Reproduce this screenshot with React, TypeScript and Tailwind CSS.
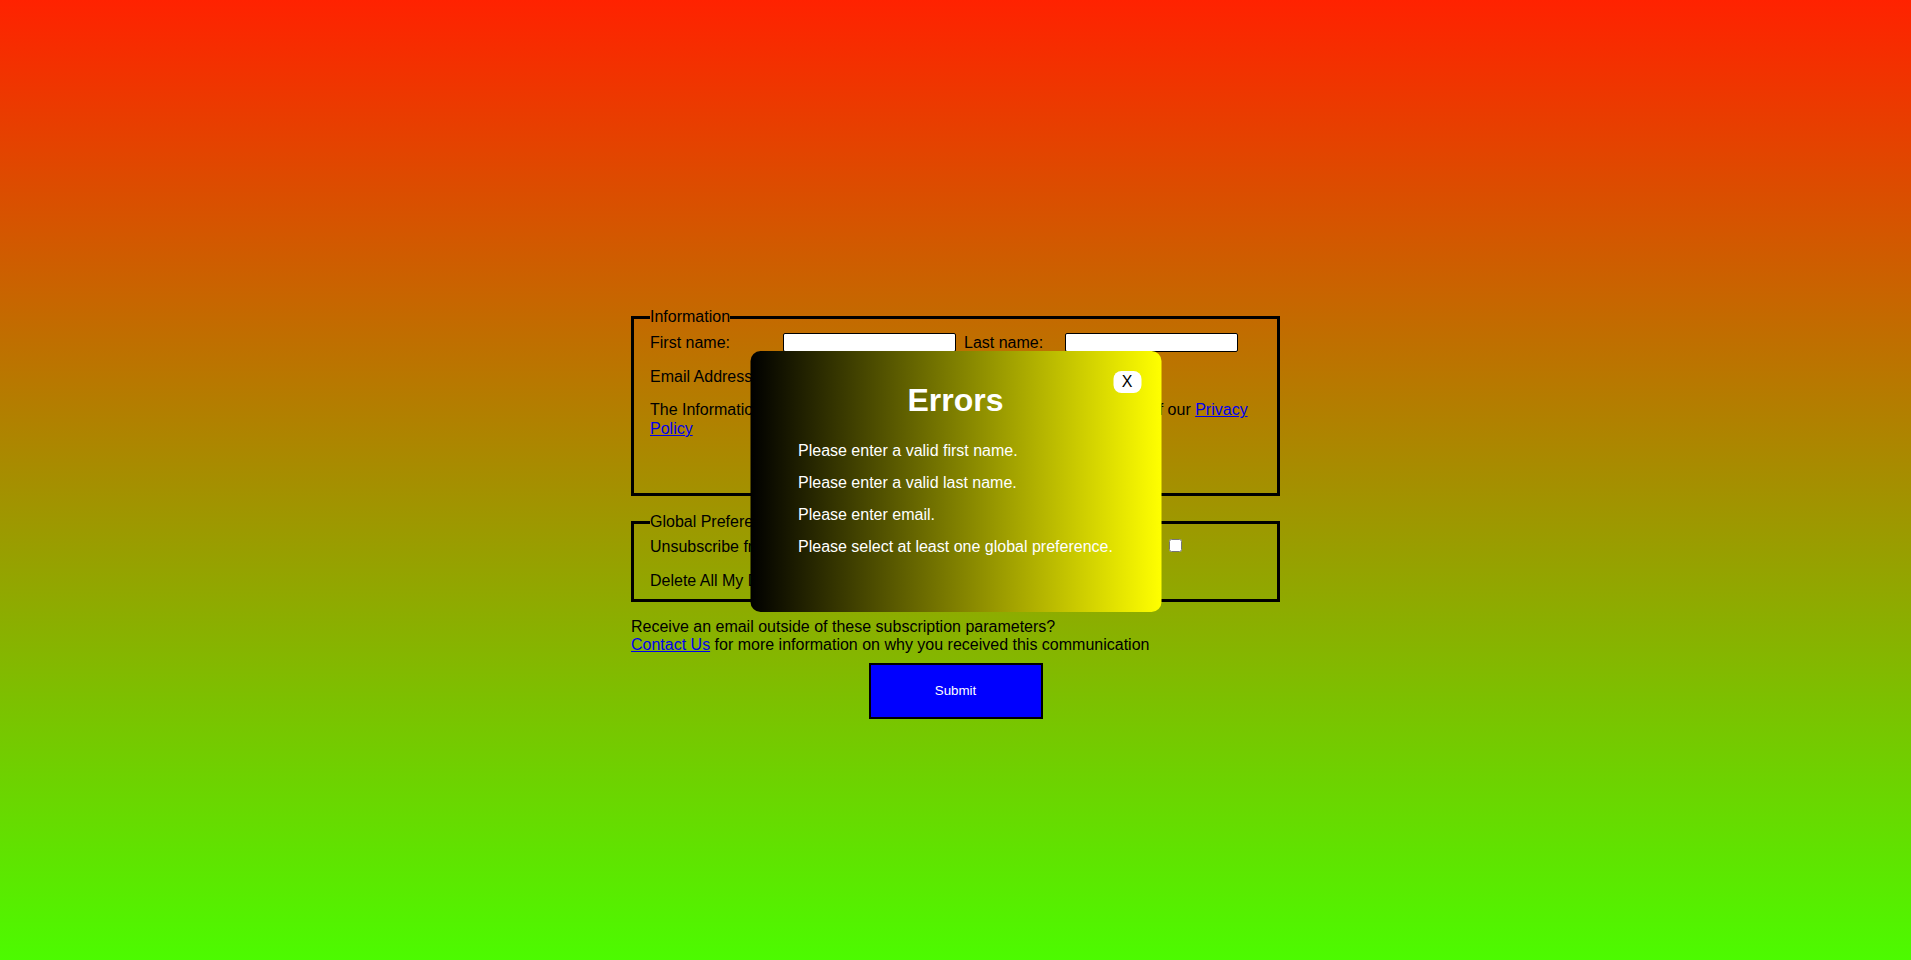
import { useState } from "react";

const errors = [
  "Please enter a valid first name.",
  "Please enter a valid last name.",
  "Please enter email.",
  "Please select at least one global preference.",
];

export default function App() {
  const [open, setOpen] = useState(true);

  return (
    <div
      className="min-h-screen w-full bg-[linear-gradient(to_bottom,#ff2200,#4cfb00)] text-black text-[16px] leading-[18.4px]"
      style={{ fontFamily: '"Liberation Sans", Arial, sans-serif' }}
    >
      <form className="mx-auto w-[649px] pt-[308px]" onSubmit={(e) => e.preventDefault()}>
        {/* Information */}
        <fieldset className="border-[3px] border-black pl-4 pr-4 pt-[7px] pb-[55px]">
          <legend className="px-0">Information</legend>
          <div className="flex flex-col gap-[15px]">
            <div className="flex h-[19px] items-center">
              <span className="w-[133px] shrink-0">First name:</span>
              <input type="text" className="h-[19px] w-[173px] rounded-[2px] border border-black bg-white" />
              <span className="ml-[8px] w-[101px] shrink-0">Last name:</span>
              <input type="text" className="h-[19px] w-[173px] rounded-[2px] border border-black bg-white" />
            </div>
            <div className="flex h-[19px] items-center">
              <span className="w-[133px] shrink-0">Email Address:</span>
              <input type="email" className="h-[19px] w-[173px] rounded-[2px] border border-black bg-white" />
            </div>
            <p>
              The Information you provide will be used in accordance with the terms of our{" "}
              <a href="#" className="text-[#0000ee] underline">Privacy Policy</a>
            </p>
          </div>
        </fieldset>

        {/* Global Preferences */}
        <fieldset className="mt-[17px] border-[3px] border-black pl-4 pr-4 pt-[6px] pb-[8px]">
          <legend className="px-0">Global Preferences</legend>
          <div className="flex flex-col gap-[15px]">
            <div className="flex h-[19px] items-center">
              <span className="w-[519px] shrink-0">Unsubscribe from all marketing communications</span>
              <input type="checkbox" className="m-0 mb-[4px] h-[13px] w-[13px]" />
            </div>
            <div className="flex h-[19px] items-center">
              <span>Delete All My Data</span>
            </div>
          </div>
        </fieldset>

        <p className="mt-[16px]">
          Receive an email outside of these subscription parameters?
          <br />
          <a href="#" className="text-[#0000ee] underline">Contact Us</a> for more information on why you received
          this communication
        </p>

        <div className="mt-[9px] flex justify-center">
          <button
            type="submit"
            className="h-[56px] w-[174px] border-2 border-black bg-[#0000ff] text-[13.333px] text-white"
          >
            Submit
          </button>
        </div>
      </form>

      {open && (
        <div className="fixed left-1/2 top-[351px] h-[261px] w-[411px] -translate-x-1/2 rounded-[10px] bg-[linear-gradient(to_right,#000000,#ffff00)] text-white">
          <button
            onClick={() => setOpen(false)}
            className="absolute right-[20px] top-[20px] flex h-[22px] w-[28px] items-center justify-center rounded-[8px] bg-white text-[16px] text-black"
          >
            X
          </button>
          <h2 className="pt-[31px] text-center text-[32px] font-bold leading-[37px]">Errors</h2>
          <ul className="mt-[23px] flex flex-col gap-[14px] pl-[48px]">
            {errors.map((e) => (
              <li key={e} className="leading-[18px]">{e}</li>
            ))}
          </ul>
        </div>
      )}
    </div>
  );
}
